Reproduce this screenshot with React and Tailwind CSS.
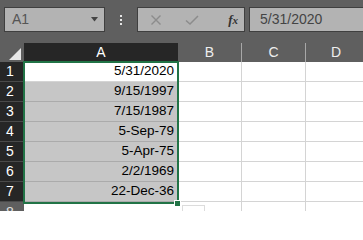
import React from "react";

const rows = [
  { n: 1, v: "5/31/2020" },
  { n: 2, v: "9/15/1997" },
  { n: 3, v: "7/15/1987" },
  { n: 4, v: "5-Sep-79" },
  { n: 5, v: "5-Apr-75" },
  { n: 6, v: "2/2/1969" },
  { n: 7, v: "22-Dec-36" },
];

const font = { fontFamily: '"Liberation Sans", Arial, sans-serif' };

const App = () => {
  return (
    <div className="w-[363px] h-[211px] overflow-hidden bg-[#5f5f5f]" style={font}>
      {/* formula bar */}
      <div className="h-[43px] flex items-start pt-[7px] pl-[4px]">
        <div className="w-[101px] h-[25px] bg-[#b3b3b3] border border-[#3f3f3f] flex items-center justify-between pl-[7px] pr-[6px]">
          <span className="text-[14px] text-[#555555]">A1</span>
          <svg width="7" height="5" viewBox="0 0 7 5">
            <path d="M0 0 H7 L3.5 4.5 Z" fill="#444444" />
          </svg>
        </div>
        <div className="w-[32px] h-[25px] flex flex-col items-center justify-center gap-[2px]">
          <span className="w-[2px] h-[2px] bg-[#e6e6e6]" />
          <span className="w-[2px] h-[2px] bg-[#e6e6e6]" />
          <span className="w-[2px] h-[2px] bg-[#e6e6e6]" />
        </div>
        <div className="w-[108px] h-[25px] bg-[#b3b3b3] border border-[#3f3f3f] flex items-center pl-[12px] pr-[6px]">
          <svg width="12" height="12" viewBox="0 0 12 12">
            <path d="M1.5 1.5 L10.5 10.5 M10.5 1.5 L1.5 10.5" stroke="#8c8c8c" strokeWidth="1.4" fill="none" />
          </svg>
          <svg width="14" height="12" viewBox="0 0 14 12" className="ml-[23px]">
            <path d="M1 6.5 L5 10 L13 2" stroke="#8c8c8c" strokeWidth="1.5" fill="none" />
          </svg>
          <span className="ml-auto text-[13px] italic text-[#333333] font-bold" style={{ fontFamily: '"Liberation Serif", serif' }}>
            f<span className="text-[11px]">x</span>
          </span>
        </div>
        <div className="ml-[4px] flex-1 h-[25px] bg-[#b3b3b3] border border-[#3f3f3f] border-r-0 flex items-center pl-[10px]">
          <span className="text-[14px] text-[#444444]">5/31/2020</span>
        </div>
      </div>

      {/* sheet */}
      <div className="relative">
        <div className="flex h-[19px]">
          <div className="w-[24px] bg-[#5f5f5f] relative">
            <svg width="12" height="12" viewBox="0 0 12 12" className="absolute right-[3px] bottom-[2px]">
              <path d="M12 0 V12 H0 Z" fill="#e8e8e8" />
            </svg>
          </div>
          <div className="w-[154px] bg-[#262626] flex items-center justify-center text-[14px] text-white">A</div>
          <div className="w-[64px] border-r border-[#a8a8a8] flex items-center justify-center text-[14px] text-[#eeeeee]">B</div>
          <div className="w-[64px] border-r border-[#a8a8a8] flex items-center justify-center text-[14px] text-[#eeeeee]">C</div>
          <div className="flex-1 flex items-center pl-[25px] text-[14px] text-[#eeeeee]">D</div>
        </div>

        {rows.map((r) => (
          <div key={r.n} className="flex h-[20px] bg-white">
            <div className="w-[24px] bg-[#262626] border-b border-[#4a4a4a] flex items-center pl-[6px] text-[14px] text-white">
              {r.n}
            </div>
            <div
              className={
                "w-[154px] border-b flex items-center justify-end pr-[4px] text-[13.5px] text-black " +
                (r.n === 1 ? "bg-white border-[#d4d4d4]" : "bg-[#c6c6c6] border-[#ababab]")
              }
            >
              {r.v}
            </div>
            <div className="w-[64px] border-r border-b border-[#d4d4d4]" />
            <div className="w-[64px] border-r border-b border-[#d4d4d4]" />
            <div className="flex-1 border-b border-[#d4d4d4]" />
          </div>
        ))}

        <div className="flex h-[20px] bg-white">
          <div className="w-[24px] bg-[#5f5f5f] flex items-center pl-[6px] text-[14px] text-[#e0e0e0]">8</div>
          <div className="w-[154px]" />
          <div className="w-[64px] border-r border-[#d4d4d4] relative">
            <div className="absolute left-[4px] top-[3px] w-[23px] h-[20px] border border-[#dcdcdc]" />
          </div>
          <div className="w-[64px] border-r border-[#d4d4d4]" />
          <div className="flex-1" />
        </div>

        {/* selection outline */}
        <div className="absolute left-[23px] top-[18px] w-[156px] h-[143px] border-2 border-[#217346] pointer-events-none" />
        <div className="absolute left-[174px] top-[157px] w-[7px] h-[7px] bg-[#217346] border border-white" />
      </div>
    </div>
  );
};

export default App;
